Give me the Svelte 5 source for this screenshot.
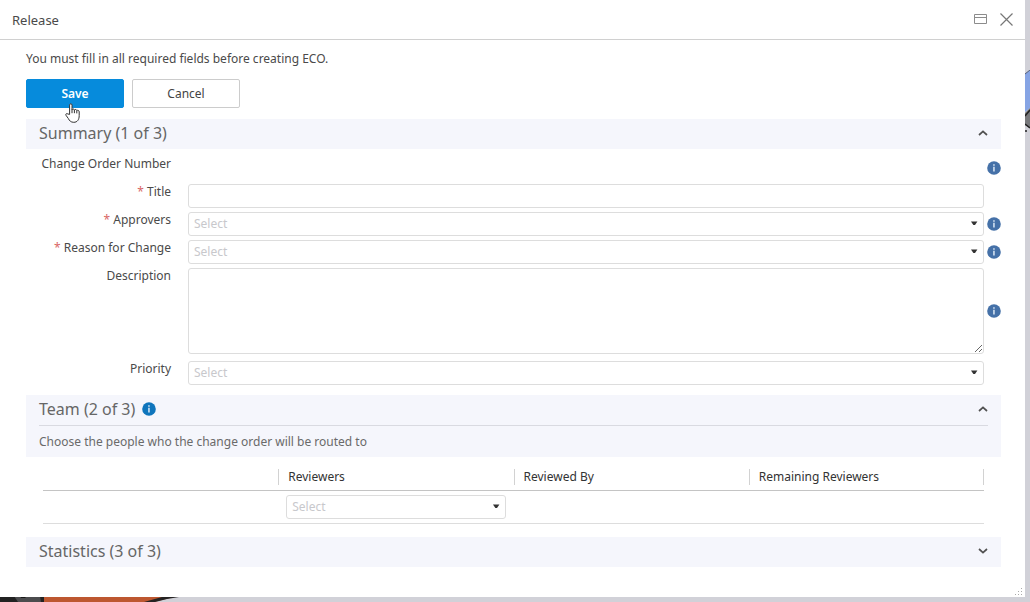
<script lang="ts">
  let title = $state('');
  let description = $state('');
  let open = $state({ summary: true, team: true, statistics: false });

  const columns = ['Reviewers', 'Reviewed By', 'Remaining Reviewers'];
</script>

{#snippet chevron(up: boolean)}
  <svg width="10" height="8" viewBox="0 0 10 8" fill="none" stroke="#505050" stroke-width="1.7" aria-hidden="true">
    <path d={up ? 'M1 6 5 2.4 9 6' : 'M1 2 5 5.6 9 2'} />
  </svg>
{/snippet}

{#snippet info(label: string)}
  <button class="info" type="button" aria-label={label}>
    <svg width="14" height="14" viewBox="0 0 14 14" aria-hidden="true">
      <circle cx="7" cy="7" r="6.8" fill="currentColor" />
      <path d="M6.2 3.2h1.5v1.5H6.2zM6.2 5.8h1.5v4.7H6.2z" fill="#dce9f5" />
    </svg>
  </button>
{/snippet}

{#snippet picker(id: string, label: string)}
  <div class="picker">
    <select {id} aria-label={label}>
      <option>Select</option>
    </select>
    <svg class="caret" width="8" height="5" viewBox="0 0 8 5" aria-hidden="true">
      <path d="M1 .5h6.400L5 4H3.400z" fill="#333" />
    </svg>
  </div>
{/snippet}

<div class="viewport">
  <svg class="model-bottom" width="180" height="6" viewBox="0 0 180 6" aria-hidden="true">
    <path d="M0 0h44v6H0z" fill="#4c4c4e" />
    <path d="M0 0h14l4 6H0z" fill="#222" />
    <path d="M20 0h7l-2 2h-4z" fill="#181818" />
    <path d="M40 0h4v6h-3z" fill="#222" />
    <path d="M44 0h134l-24 6H44z" fill="#bd5730" />
    <path d="M144 6 162 1h17l-12 2-12 3z" fill="#252323" />
  </svg>
  <svg class="model-right" width="5" height="66" viewBox="0 0 5 66" aria-hidden="true">
    <path d="M5 0 0 4v38l5-4z" fill="#86a4e4" />
    <path d="M5 0 0 4" stroke="#555f78" />
    <path d="M0 43l5-5v20l-5-3z" fill="#77787b" />
    <path d="M0 46l5-6M0 54l5 4M0 61h2" fill="none" stroke="#222" stroke-width="1.5" />
  </svg>

  <div class="dialog" role="dialog" aria-labelledby="dialog-title">
    <header class="titlebar">
      <h1 id="dialog-title">Release</h1>
      <div class="window-actions">
        <button type="button" aria-label="Maximize">
          <svg width="13" height="11" viewBox="0 0 13 11" fill="none" stroke="#8c8c8c" aria-hidden="true">
            <path d="M.5.5h12v9H.5zM.5 3.5h12" />
          </svg>
        </button>
        <button type="button" aria-label="Close">
          <svg width="13" height="13" viewBox="0 0 13 13" fill="none" stroke="#777" stroke-width="1.2" aria-hidden="true">
            <path d="M.5.5l12 12M12.5.5l-12 12" />
          </svg>
        </button>
      </div>
    </header>

    <form class="content" onsubmit={(e) => e.preventDefault()}>
      <p class="message">You must fill in all required fields before creating ECO.</p>
      <div class="actions">
        <button class="btn primary" type="submit">
          Save
          <svg class="pointer" width="16" height="20" viewBox="0 0 16 20" aria-hidden="true">
            <path
              d="M4.6 11.4V2.1c0-1.8 2.4-1.8 2.4 0v4.7c.2-1.2 2.3-1.1 2.4.3.4-1 2.3-.8 2.4.6.6-.8 2.4-.5 2.4 1.2v3.7c0 4-1.9 6.7-5.4 6.7-3.1 0-4.3-1.6-5.5-3.8L1 12.3c-.8-1.4.9-2.3 1.9-1.3z"
              fill="#fff"
              stroke="#333"
            />
            <path d="M7 6.5v3.700M9.400 7v3.200M11.800 8v2.400" stroke="#333" fill="none" />
          </svg>
        </button>
        <button class="btn" type="button">Cancel</button>
      </div>

      <section>
        <div class="section-header">
          <div class="section-title">
            <h2>Summary (1 of 3)</h2>
            <button class="toggle" type="button" aria-label="Toggle summary" aria-expanded={open.summary} onclick={() => (open.summary = !open.summary)}>
              {@render chevron(open.summary)}
            </button>
          </div>
        </div>
        {#if open.summary}
          <div class="fields">
            <div class="row">
              <span class="label">Change Order Number</span>
              <span></span>
              {@render info('About change order number')}
            </div>
            <div class="row">
              <label for="title"><span class="required">*</span> Title</label>
              <input id="title" type="text" bind:value={title} />
            </div>
            <div class="row">
              <label for="approvers"><span class="required">*</span> Approvers</label>
              {@render picker('approvers', 'Approvers')}
              {@render info('About approvers')}
            </div>
            <div class="row">
              <label for="reason"><span class="required">*</span> Reason for Change</label>
              {@render picker('reason', 'Reason for Change')}
              {@render info('About reason for change')}
            </div>
            <div class="row tall">
              <label for="description">Description</label>
              <textarea id="description" bind:value={description}></textarea>
              {@render info('About description')}
            </div>
            <div class="row">
              <label for="priority">Priority</label>
              {@render picker('priority', 'Priority')}
            </div>
          </div>
        {/if}
      </section>

      <section>
        <div class="section-header">
          <div class="section-title" class:ruled={open.team}>
            <h2>Team (2 of 3)</h2>
            <span class="team-info">{@render info('About team')}</span>
            <button class="toggle" type="button" aria-label="Toggle team" aria-expanded={open.team} onclick={() => (open.team = !open.team)}>
              {@render chevron(open.team)}
            </button>
          </div>
          {#if open.team}
            <p class="hint">Choose the people who the change order will be routed to</p>
          {/if}
        </div>
        {#if open.team}
          <table>
            <thead>
              <tr>
                <td></td>
                {#each columns as column}
                  <th scope="col"><span>{column}</span></th>
                {/each}
              </tr>
            </thead>
            <tbody>
              <tr>
                <td></td>
                <td>{@render picker('reviewers', 'Reviewers')}</td>
                <td></td>
                <td></td>
              </tr>
            </tbody>
          </table>
        {/if}
      </section>

      <section>
        <div class="section-header">
          <div class="section-title">
            <h2>Statistics (3 of 3)</h2>
            <button class="toggle" type="button" aria-label="Toggle statistics" aria-expanded={open.statistics} onclick={() => (open.statistics = !open.statistics)}>
              {@render chevron(open.statistics)}
            </button>
          </div>
        </div>
      </section>
    </form>

    <svg class="grip" width="8" height="8" viewBox="0 0 8 8" fill="#aaa" aria-hidden="true">
      <path d="M6 0h1v1H6zM3 3h1v1H3zM6 3h1v1H6zM0 6h1v1H0zM3 6h1v1H3zM6 6h1v1H6z" />
    </svg>
  </div>
</div>

<style>
  :global(body) {
    background: #d1d1d8;
  }
  .viewport {
    position: relative;
    box-sizing: border-box;
    min-height: 100vh;
    padding: 0 5px 5px 0;
    display: flex;
    font-family: 'Noto Sans', 'Open Sans', sans-serif;
    font-size: 12px;
    line-height: 16px;
    color: #4a4a4a;
  }
  .model-bottom {
    position: absolute;
    left: 0;
    bottom: 0;
  }
  .model-right {
    position: absolute;
    right: 0;
    top: 70px;
  }
  .dialog {
    position: relative;
    flex: 1;
    min-width: 0;
    background: #fff;
  }
  h1,
  h2,
  p {
    margin: 0;
    font-weight: 400;
  }
  button,
  input,
  select,
  textarea {
    font: inherit;
    color: inherit;
    box-sizing: border-box;
    margin: 0;
  }
  button {
    cursor: pointer;
  }
  .titlebar {
    display: flex;
    align-items: center;
    justify-content: space-between;
    height: 39px;
    padding: 0 12px;
    border-bottom: 1px solid #d0d0d0;
  }
  h1 {
    font-size: 13px;
  }
  .window-actions {
    display: flex;
    gap: 13px;
  }
  .window-actions button,
  .toggle,
  .info {
    display: flex;
    align-items: center;
    padding: 0;
    border: 0;
    background: none;
  }
  .content {
    padding: 11px 24px 30px 26px;
  }
  .actions {
    display: flex;
    gap: 8px;
    margin: 12px 0 11px;
  }
  .btn {
    width: 108px;
    height: 29px;
    padding: 0;
    border: 1px solid #ccc;
    border-radius: 2px;
    background: #fff;
    color: #444;
  }
  .primary {
    position: relative;
    width: 98px;
    border-color: #068bdc;
    background: #068bdc;
    color: #fff;
    font-weight: 600;
  }
  .pointer {
    position: absolute;
    left: 38px;
    top: 23px;
    z-index: 1;
  }
  .section-header {
    padding: 0 13px;
    background: #f5f6fc;
  }
  .section-title {
    display: flex;
    align-items: center;
    height: 28px;
    padding-bottom: 2px;
  }
  .ruled {
    border-bottom: 1px solid #d9dae1;
  }
  h2 {
    font-size: 16px;
    line-height: 20px;
    color: #666;
  }
  .toggle {
    margin-left: auto;
  }
  .hint {
    padding: 8px 0 7px;
    color: #6a6a6a;
  }
  .fields {
    display: flex;
    flex-direction: column;
    gap: 4px;
    padding: 7px 0 10px;
  }
  .row {
    display: grid;
    grid-template-columns: 145px 1fr 14px;
    column-gap: 3px;
    min-height: 24px;
  }
  .row > :global(:nth-child(2)) {
    margin-left: 14px;
  }
  .row label,
  .label {
    text-align: right;
  }
  .tall {
    margin-bottom: 3px;
  }
  .required {
    color: #d96666;
  }
  .info {
    color: #4571a8;
  }
  .team-info {
    margin-left: 7px;
  }
  .team-info .info {
    color: #0f75bc;
  }
  input,
  select,
  textarea {
    border: 1px solid #ddd;
    border-radius: 3px;
    background: #fff;
    padding: 0 5px;
  }
  input,
  select {
    height: 24px;
  }
  textarea {
    height: 86px;
    resize: vertical;
  }
  .picker {
    position: relative;
    display: grid;
  }
  select {
    width: 100%;
    appearance: none;
    color: #c8c8cc;
  }
  .caret {
    position: absolute;
    right: 6px;
    top: 9px;
    pointer-events: none;
  }
  table {
    width: calc(100% - 34px);
    margin: 9px 17px 13px;
    border-collapse: collapse;
    table-layout: fixed;
  }
  th,
  td {
    padding: 0;
    text-align: left;
    font-weight: 400;
  }
  thead tr {
    border-bottom: 1px solid #c4c4c4;
  }
  thead td,
  thead th {
    height: 22px;
    padding-bottom: 2px;
    color: #333;
  }
  th span {
    display: block;
    padding-left: 9px;
    border-left: 1px solid #d2d2d2;
  }
  th:last-child span {
    border-right: 1px solid #d2d2d2;
  }
  tbody tr {
    border-bottom: 1px solid #ddd;
  }
  tbody td {
    padding: 4px 8px;
  }
  .grip {
    position: absolute;
    right: 2px;
    bottom: 1px;
  }
</style>
